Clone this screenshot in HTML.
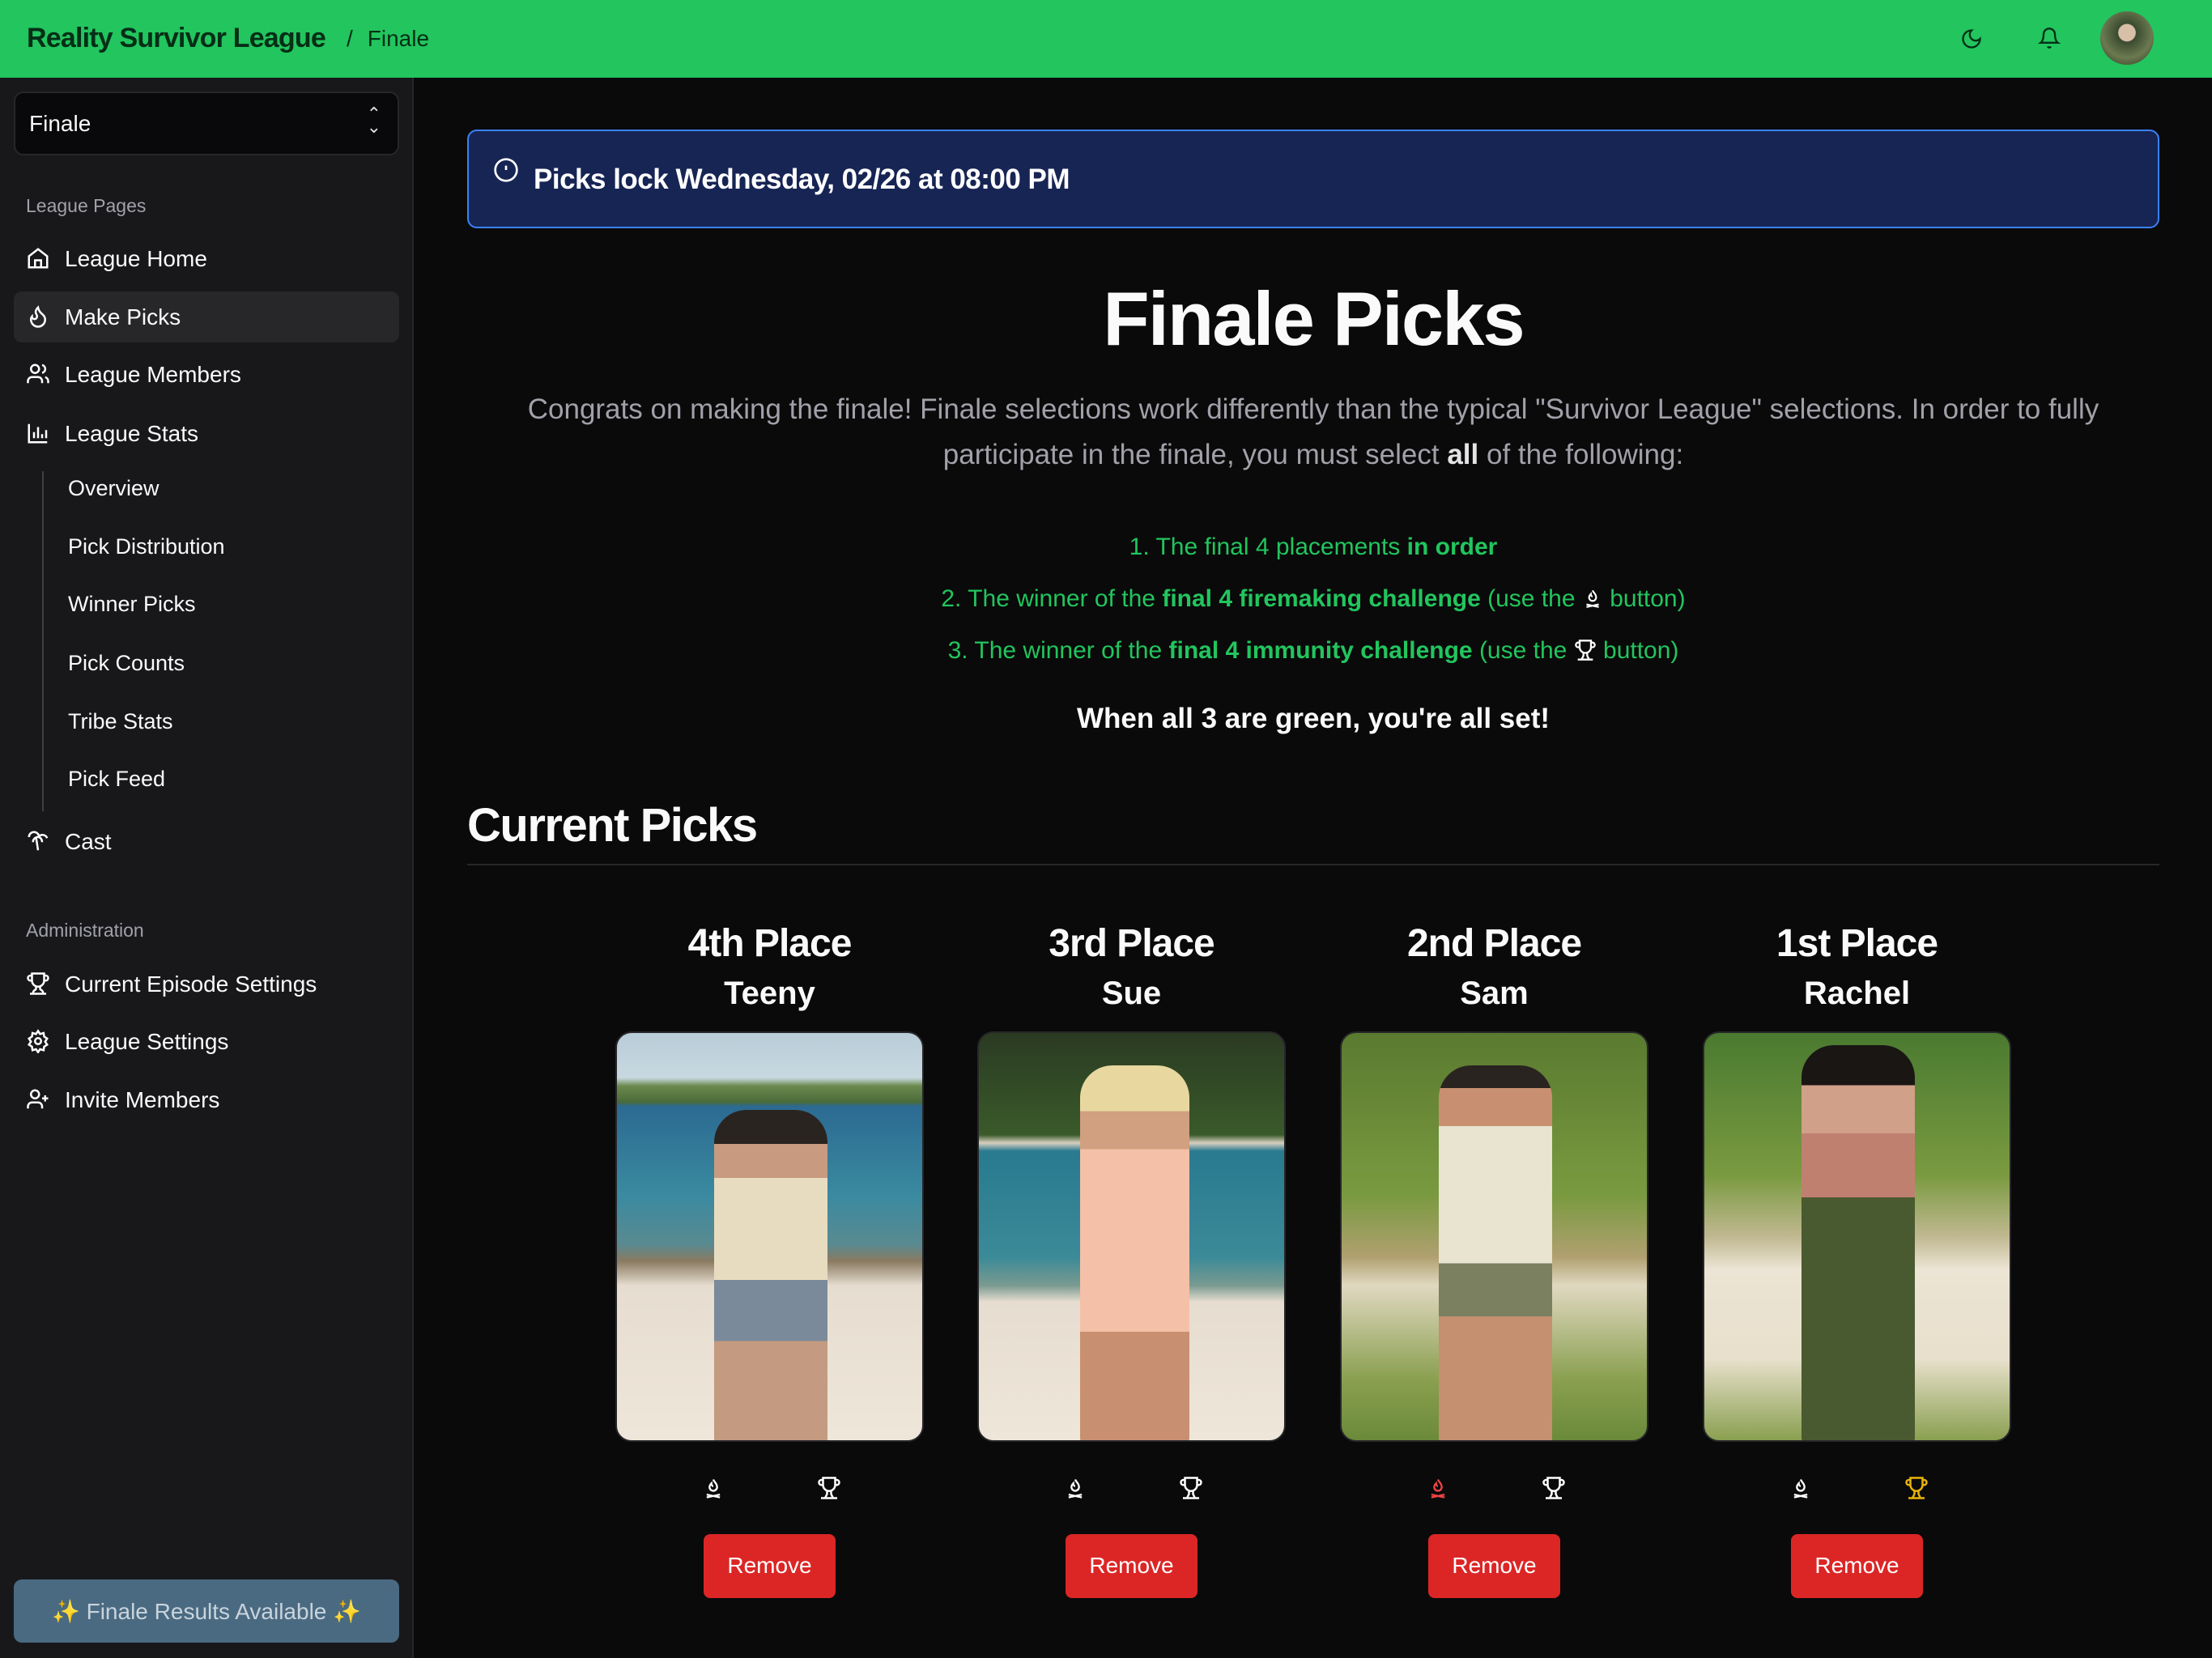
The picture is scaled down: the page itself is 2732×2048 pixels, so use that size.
<!DOCTYPE html>
<html><head><meta charset="utf-8"><style>
*{box-sizing:border-box;margin:0;padding:0}
body{width:2732px;height:2048px;background:#0a0a0a;font-family:"Liberation Sans",sans-serif;color:#fafafa;position:relative;overflow:hidden}
.hdr{position:absolute;left:0;top:0;width:2732px;height:96px;background:#22c55e}
.hdr .t{position:absolute;left:33px;top:28px;font-size:34px;font-weight:bold;color:#052e16;letter-spacing:-0.8px}
.hdr .b{position:absolute;left:428px;top:32px;font-size:28px;color:#052e16}
.side{position:absolute;left:0;top:96px;width:511px;height:1952px;background:#18181b;border-right:2px solid #27272a}
.sel{position:absolute;left:17px;top:17px;width:476px;height:79px;background:#09090b;border:2px solid #27272a;border-radius:12px;font-size:28px;padding:22px 0 0 17px}
.lbl{position:absolute;left:32px;font-size:23px;color:#a1a1aa}
.it{position:absolute;left:80px;font-size:28px;color:#fafafa}
.sub{position:absolute;left:84px;font-size:27px;color:#fafafa}
.ic{position:absolute;left:32px;width:30px;height:30px}
.hl{position:absolute;left:17px;top:264px;width:476px;height:63px;background:#27272a;border-radius:10px}
.vl{position:absolute;left:52px;top:486px;width:2px;height:420px;background:#3f3f46}
.fin{position:absolute;left:17px;top:1855px;width:476px;height:78px;background:#4a6a82;border-radius:10px;text-align:center;font-size:28px;color:#c9d4dc;padding-top:23px}
.alert{position:absolute;left:577px;top:160px;width:2090px;height:122px;background:#172554;border:2px solid #3b82f6;border-radius:12px}
.alert .tx{position:absolute;left:80px;top:40px;font-size:35px;font-weight:bold;color:#fff;letter-spacing:-0.5px}
.c{position:absolute;left:577px;width:2090px;text-align:center}
.g{color:#22c55e;font-size:30px;line-height:40px}
.card{position:absolute;width:381px;text-align:center}
.card h2{font-size:48px;font-weight:bold;letter-spacing:-1px}
.card h3{font-size:40px;font-weight:bold;margin-top:12px}
.img{position:absolute;left:0;top:136px;width:381px;height:507px;border-radius:20px;overflow:hidden;border:2px solid #27272a}
.rm{position:absolute;left:109px;top:757px;width:163px;height:79px;background:#dc2626;border-radius:8px;font-size:28px;color:#fff;padding-top:23px}
.fi{position:absolute;top:685px;left:107px}
.tr{position:absolute;top:685px;left:249px}
</style></head><body>
<div class="hdr">
<div class="t">Reality Survivor League</div>
<div class="b"><span style="margin-right:18px">/</span>Finale</div>
<svg style="position:absolute;left:2421px;top:34px" width="28" height="28" viewBox="0 0 24 24" fill="none" stroke="#052e16" stroke-width="2"><path d="M12 3a6 6 0 0 0 9 9 9 9 0 1 1-9-9Z"/></svg>
<svg style="position:absolute;left:2517px;top:32px" width="28" height="30" viewBox="0 0 24 24" fill="none" stroke="#052e16" stroke-width="2"><path d="M6 8a6 6 0 0 1 12 0c0 7 3 9 3 9H3s3-2 3-9"/><path d="M10.3 21a1.94 1.94 0 0 0 3.4 0"/></svg>
<div style="position:absolute;left:2594px;top:14px;width:66px;height:66px;border-radius:50%;background:radial-gradient(circle at 50% 40%,#d8c0a8 0 20%,#3a4a30 22%,#6b7a50 60%,#2a3520 100%)"></div>
</div>
<div class="side">
<div class="sel">Finale<span style="position:absolute;right:20px;top:18px;font-size:22px;line-height:16px;color:#ddd">⌃<br>⌄</span></div>
<div class="lbl" style="top:145px">League Pages</div>
<div class="hl"></div>
<svg class="ic" style="top:208px" viewBox="0 0 24 24" fill="none" stroke="#fff" stroke-width="2"><path d="M3 10l9-7 9 7v11H3z"/><path d="M9 21v-7h6v7"/></svg>
<div class="it" style="top:208px">League Home</div>
<svg class="ic" style="top:280px" viewBox="0 0 24 24" fill="none" stroke="#fff" stroke-width="2"><path d="M8.5 14.5A2.5 2.5 0 0 0 11 12c0-1.4-.5-2-1-3-1-2 0-4 2-6 .5 2.5 2 4.9 4 6.5 2 1.6 3 3.5 3 5.5a7 7 0 1 1-14 0c0-1.2.4-2.3 1-3 0 1.4 1.1 2.5 2.5 2.5z"/></svg>
<div class="it" style="top:280px">Make Picks</div>
<svg class="ic" style="top:351px" viewBox="0 0 24 24" fill="none" stroke="#fff" stroke-width="2"><circle cx="9" cy="7" r="4"/><path d="M2 21v-2a4 4 0 0 1 4-4h6a4 4 0 0 1 4 4v2M16 3.1a4 4 0 0 1 0 7.8M22 21v-2a4 4 0 0 0-3-3.9"/></svg>
<div class="it" style="top:351px">League Members</div>
<svg class="ic" style="top:424px" viewBox="0 0 24 24" fill="none" stroke="#fff" stroke-width="2"><path d="M3 3v18h18M8 17V11M12 17V6M16 17v-4M20 17V9"/></svg>
<div class="it" style="top:424px">League Stats</div>
<div class="vl"></div>
<div class="sub" style="top:492px">Overview</div>
<div class="sub" style="top:564px">Pick Distribution</div>
<div class="sub" style="top:635px">Winner Picks</div>
<div class="sub" style="top:708px">Pick Counts</div>
<div class="sub" style="top:780px">Tribe Stats</div>
<div class="sub" style="top:851px">Pick Feed</div>
<svg class="ic" style="top:928px" viewBox="0 0 24 24" fill="none" stroke="#fff" stroke-width="2"><path d="M13 8c0-2.8-2.2-5-5-5s-5 2.2-5 5M13 7.1A5 5 0 0 1 21 9M13 8a5 5 0 0 0-6 5M13 8c2 1 3 3 3 5M10 8l2 13"/></svg>
<div class="it" style="top:928px">Cast</div>
<div class="lbl" style="top:1040px">Administration</div>
<svg class="ic" style="top:1104px" viewBox="0 0 24 24" fill="none" stroke="#fff" stroke-width="2"><path d="M6 9H4.5a2.5 2.5 0 0 1 0-5H6M18 9h1.5a2.5 2.5 0 0 0 0-5H18M4 22h16M10 14.7V17c0 .6-.5 1-1 1.2C7.9 18.8 7 20.2 7 22M14 14.7V17c0 .6.5 1 1 1.2 1.2.5 2 2 2 3.8M18 2H6v7a6 6 0 0 0 12 0V2z"/></svg>
<div class="it" style="top:1104px">Current Episode Settings</div>
<svg class="ic" style="top:1175px" viewBox="0 0 24 24" fill="none" stroke="#fff" stroke-width="2"><circle cx="12" cy="12" r="3"/><path d="M12 2l2 3 3.5-1 .5 3.5 3 2-2 3 2 3-3 2-.5 3.5-3.5-1-2 3-2-3-3.5 1-.5-3.5-3-2 2-3-2-3 3-2 .5-3.5 3.5 1z"/></svg>
<div class="it" style="top:1175px">League Settings</div>
<svg class="ic" style="top:1247px" viewBox="0 0 24 24" fill="none" stroke="#fff" stroke-width="2"><circle cx="9" cy="7" r="4"/><path d="M2 21v-2a4 4 0 0 1 4-4h6a4 4 0 0 1 4 4v2M19 8v6M22 11h-6"/></svg>
<div class="it" style="top:1247px">Invite Members</div>
<div class="fin"><span style="color:#d4b44a">✨</span> Finale Results Available <span style="color:#d4b44a">✨</span></div>
</div>

<div class="alert">
<svg style="position:absolute;left:30px;top:32px" width="32" height="32" viewBox="0 0 24 24" fill="none" stroke="#fff" stroke-width="2"><circle cx="12" cy="12" r="10"/><path d="M12 8v4M12 16h.01"/></svg>
<div class="tx">Picks lock Wednesday, 02/26 at 08:00 PM</div>
</div>
<div class="c" style="top:340px;font-size:94px;font-weight:bold;letter-spacing:-2px">Finale Picks</div>
<div class="c" style="top:478px;font-size:35px;line-height:56px;color:#a1a1aa;padding:0 40px">Congrats on making the finale! Finale selections work differently than the typical "Survivor League" selections. In order to fully participate in the finale, you must select <b style="color:#e4e4e7">all</b> of the following:</div>
<div class="c g" style="top:656px">1. The final 4 placements <b>in order</b></div>
<div class="c g" style="top:720px">2. The winner of the <b>final 4 firemaking challenge</b> (use the <svg width="26" height="28" viewBox="0 0 24 24" fill="none" stroke="#fff" stroke-width="2" style="vertical-align:-4px"><path d="M12 3c1 3 4 4 4 8a4 4 0 0 1-8 0c0-2 1-3 2-4 0 2 1 3 2 3M5 19l14 3M19 19L5 22"/></svg> button)</div>
<div class="c g" style="top:784px">3. The winner of the <b>final 4 immunity challenge</b> (use the <svg width="28" height="28" viewBox="0 0 24 24" fill="none" stroke="#fff" stroke-width="2" style="vertical-align:-4px"><path d="M6 9H4.5a2.5 2.5 0 0 1 0-5H6M18 9h1.5a2.5 2.5 0 0 0 0-5H18M4 22h16M10 15v3l-2 4M14 15v3l2 4M18 2H6v7a6 6 0 0 0 12 0V2z"/></svg> button)</div>
<div class="c" style="top:868px;font-size:35px;font-weight:bold">When all 3 are green, you're all set!</div>
<div style="position:absolute;left:577px;top:986px;font-size:58px;font-weight:bold;letter-spacing:-1.5px">Current Picks</div>
<div style="position:absolute;left:577px;top:1067px;width:2090px;height:2px;background:#27272a"></div>

<div class="card" style="left:760px;top:1138px"><h2>4th Place</h2><h3>Teeny</h3>
<div class="img" style="background:linear-gradient(#b8cdd8 0,#c8d8e0 11%,#6b8a4e 13%,#4a6a3a 17%,#2c6a92 18%,#3a8aa0 40%,#5a8a90 52%,#8a7a60 56%,#e6ddd0 62%,#efe6da 100%)"><div style="position:absolute;left:120px;top:95px;width:140px;height:420px;background:linear-gradient(#2a2420 0 10%,#c89a80 10% 20%,#e8dcc0 20% 50%,#7a8a9a 50% 68%,#c49a80 68%);border-radius:40px 40px 10px 10px"></div></div>
<svg class="fi" width="28" height="30" viewBox="0 0 24 24" fill="none" stroke="#fff" stroke-width="2"><path d="M12 3c1 3 4 4 4 8a4 4 0 0 1-8 0c0-2 1-3 2-4 0 2 1 3 2 3M5 19l14 3M19 19L5 22"/></svg>
<svg class="tr" width="30" height="30" viewBox="0 0 24 24" fill="none" stroke="#fff" stroke-width="2"><path d="M6 9H4.5a2.5 2.5 0 0 1 0-5H6M18 9h1.5a2.5 2.5 0 0 0 0-5H18M4 22h16M10 15v3l-2 4M14 15v3l2 4M18 2H6v7a6 6 0 0 0 12 0V2z"/></svg>
<div class="rm">Remove</div></div>

<div class="card" style="left:1207px;top:1138px"><h2>3rd Place</h2><h3>Sue</h3>
<div class="img" style="background:linear-gradient(#2a3a22 0,#3a5a2a 25%,#d8d0c0 27%,#2a7a90 29%,#3a8a98 55%,#7a9a90 62%,#e6ddd0 66%,#efe6da 100%)"><div style="position:absolute;left:125px;top:40px;width:135px;height:470px;background:linear-gradient(#e8d8a0 0 12%,#d0a080 12% 22%,#f4c0a8 22% 70%,#c89070 70%);border-radius:40px 40px 10px 10px"></div></div>
<svg class="fi" width="28" height="30" viewBox="0 0 24 24" fill="none" stroke="#fff" stroke-width="2"><path d="M12 3c1 3 4 4 4 8a4 4 0 0 1-8 0c0-2 1-3 2-4 0 2 1 3 2 3M5 19l14 3M19 19L5 22"/></svg>
<svg class="tr" width="30" height="30" viewBox="0 0 24 24" fill="none" stroke="#fff" stroke-width="2"><path d="M6 9H4.5a2.5 2.5 0 0 1 0-5H6M18 9h1.5a2.5 2.5 0 0 0 0-5H18M4 22h16M10 15v3l-2 4M14 15v3l2 4M18 2H6v7a6 6 0 0 0 12 0V2z"/></svg>
<div class="rm">Remove</div></div>

<div class="card" style="left:1655px;top:1138px"><h2>2nd Place</h2><h3>Sam</h3>
<div class="img" style="background:linear-gradient(#5a7a30 0,#7a9a40 40%,#b0a070 55%,#e0d8c0 62%,#8aa050 85%,#6a8a3a 100%)"><div style="position:absolute;left:120px;top:40px;width:140px;height:470px;background:linear-gradient(#2a2420 0 6%,#c89070 6% 16%,#e8e4d0 16% 52%,#7a8060 52% 66%,#c49070 66%);border-radius:40px 40px 10px 10px"></div></div>
<svg class="fi" width="28" height="30" viewBox="0 0 24 24" fill="none" stroke="#ef4444" stroke-width="2"><path d="M12 3c1 3 4 4 4 8a4 4 0 0 1-8 0c0-2 1-3 2-4 0 2 1 3 2 3M5 19l14 3M19 19L5 22"/></svg>
<svg class="tr" width="30" height="30" viewBox="0 0 24 24" fill="none" stroke="#fff" stroke-width="2"><path d="M6 9H4.5a2.5 2.5 0 0 1 0-5H6M18 9h1.5a2.5 2.5 0 0 0 0-5H18M4 22h16M10 15v3l-2 4M14 15v3l2 4M18 2H6v7a6 6 0 0 0 12 0V2z"/></svg>
<div class="rm">Remove</div></div>

<div class="card" style="left:2103px;top:1138px"><h2>1st Place</h2><h3>Rachel</h3>
<div class="img" style="background:linear-gradient(#4a7a30 0,#7a9a40 35%,#c0b890 50%,#ece4d4 58%,#e8e0cc 80%,#8aa050 100%)"><div style="position:absolute;left:120px;top:15px;width:140px;height:495px;background:linear-gradient(#1a1614 0 10%,#d0a088 10% 22%,#c08070 22% 38%,#4a5a30 38%);border-radius:40px 40px 10px 10px"></div></div>
<svg class="fi" width="28" height="30" viewBox="0 0 24 24" fill="none" stroke="#fff" stroke-width="2"><path d="M12 3c1 3 4 4 4 8a4 4 0 0 1-8 0c0-2 1-3 2-4 0 2 1 3 2 3M5 19l14 3M19 19L5 22"/></svg>
<svg class="tr" width="30" height="30" viewBox="0 0 24 24" fill="none" stroke="#eab308" stroke-width="2"><path d="M6 9H4.5a2.5 2.5 0 0 1 0-5H6M18 9h1.5a2.5 2.5 0 0 0 0-5H18M4 22h16M10 15v3l-2 4M14 15v3l2 4M18 2H6v7a6 6 0 0 0 12 0V2z"/></svg>
<div class="rm">Remove</div></div>
</body></html>
